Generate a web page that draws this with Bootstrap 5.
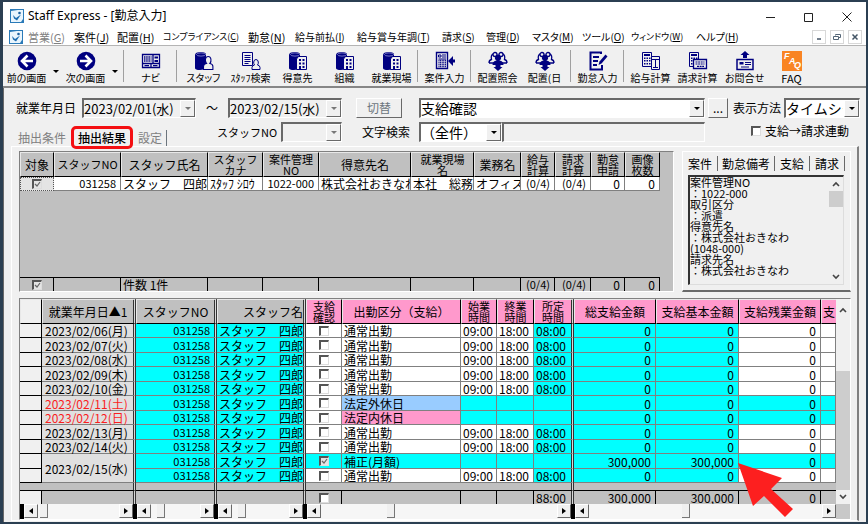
<!DOCTYPE html>
<html lang="ja">
<head>
<meta charset="utf-8">
<meta name="viewport" content="width=device-width, initial-scale=1">
<title>Staff Express - [勤怠入力]</title>
<link href="https://cdn.jsdelivr.net/npm/bootstrap@5.3.0/dist/css/bootstrap.min.css" rel="stylesheet">
<style>
body{font-family:"Noto Sans CJK JP",sans-serif;font-size:12px;line-height:14px;color:#000;background:#fff}
.win{min-height:calc(100vh - 1px);border:2px solid #2b3f52;border-left-width:3px;background:#f0f0f0}
button,select,input,textarea{font-family:inherit;color:inherit;border-radius:0}
.titlebar{height:27px;padding-left:7px;background:#fff}
.titlebar .caption{font-family:"Noto Sans","Noto Sans CJK JP",sans-serif;font-size:12px}
.wbtn{width:38px;height:27px;border:0;background:none;padding:0}
.menubar{height:16px;background:#fff;padding-left:6px;display:grid;grid-template-columns:19px 46px 43px 46px 85px 47px 62px 85px 44px 46px 50px 49px 65px 1fr auto}
.menubar .mi{border:0;background:none;padding:0;font-size:11px;line-height:14px;text-align:left;white-space:nowrap;font-feature-settings:"palt"}
.menubar .kana{font-size:10px}
.menubar .tiny{font-size:9px}
.menubar .off{color:#808080}
.mdi{width:14px;height:14px;border:1px solid #d8d8d8;background:#fff;padding:0;display:flex;align-items:center;justify-content:center}
.toolbar-x{height:43px;border-top:1px solid #b4b4b4;border-bottom:2px solid #868686}
.tb{width:47px;border:0;background:none;padding:5px 0 0;display:flex;flex-direction:column;align-items:center;font-size:10px;line-height:14px;white-space:nowrap;font-feature-settings:"palt"}
.tb svg{width:20px;height:20px;display:block}
.tb .big{font-size:11px}
.dd{width:12px;border:0;background:none;padding:10px 0 0;display:flex;align-items:center;justify-content:center}
.sep{width:6px;padding:4px 2px}
.sep::before{content:"";display:block;height:100%;border-left:1px solid #a0a0a0}
.tri{display:block;border:3px solid transparent;border-top-color:#000;border-bottom:0}
.client{border-left:1px solid #696969;padding-top:10px}
.line{height:20px;padding:0 6px 0 12px}
.combo,.sunken{height:20px;border:1px solid;border-color:#696969 #fff #fff #696969;border-width:2px 1px 1px 2px;position:relative}
.combo select{appearance:none;width:100%;height:17px;border:0;padding:0 16px 0 0;background:#fff;font-size:14px;line-height:17px;display:block}
.combo.dis select{background:#f0f0f0;font-size:13px}
.combo .ar{position:absolute;right:0;top:0;width:15px;height:17px;pointer-events:none;display:flex;align-items:center;justify-content:center}
.raised,.combo .ar{background:#f0f0f0;border:1px solid;border-color:#fff #696969 #696969 #fff}
.raised{padding:0;line-height:16px}
.dis .tri{border-top-color:#777}
.w114{width:114px}.w76{width:76px}.w61{width:61px}.w83{width:83px}
.ck{appearance:none;width:10px;height:10px;margin:0;border:1px solid;border-color:#555 #ddd #ddd #555;border-width:2px 1px 1px 2px;background:#fff;display:block}
.ck:checked{background:#e4e4e4 url("data:image/svg+xml,%3Csvg xmlns='http://www.w3.org/2000/svg' viewBox='0 0 7 7'%3E%3Cpath d='M1 3l2 2 3-4' fill='none' stroke='%23666' stroke-width='1.2'/%3E%3C/svg%3E") center/7px no-repeat}
.second{height:28px;padding:4px 6px 0 10px}
.second label{white-space:nowrap}
.ptab{border:0;background:none;padding:0;color:#808080;line-height:16px;position:relative;white-space:nowrap}
.ptab.on{color:#000;font-weight:500}
.ptab.on::after{content:"";position:absolute;left:-7px;right:-7px;top:-4px;height:23px;border:3px solid #f40f12;border-radius:5px}
.tabs-x{width:203px;height:24px;gap:12px;padding:0 0 0 4px}
.panel{border:1px solid;border-color:#fff #808080 #fff #fff;border-right-width:2px;margin:0 7px 0 7px;padding:4px 6px 0 7px}
.gridbox{background:#c0c0c0;border:1px solid #808080;border-color:#808080 #fff #fff #808080}
.g{table-layout:fixed;width:100%;border-collapse:separate;border-spacing:0;line-height:13px}
.g th,.g td{padding:0 4px 0 2px;white-space:nowrap;height:inherit}
.g .clip{overflow-x:clip;padding-right:0}
.g th{height:25px;background:#c0c0c0;font-weight:400;text-align:center;line-height:12px;padding:0;border:1px solid;border-color:#e8e8e8 #000 #000 #e8e8e8}
.g th.two{font-size:11px;line-height:11px}
.g tbody td{border-right:1px solid #808080;border-bottom:1px solid #808080;background:#fff}
.g .num{text-align:right}
.g .code{text-align:right;font-size:11px}
.g .ck{margin:0 auto}
.g .ctr{padding:0}
.top-g tbody tr{height:14px}
.top-g tbody td.sel{background:#e4e4e4;border:1px dotted #555;padding:0}
.top-g tr.fill,.top-g tr.fill td{height:86px;background:#c0c0c0;border:0}
.g tfoot td{height:14px;background:#c0c0c0;border-top:1px solid #000;border-right:1px solid #000}
.g .end,.g tbody .end,.g tfoot .end{background:#c0c0c0;border:0}
.side{width:169px;border:1px solid;border-color:#fff #fff #696969 #fff;border-bottom-width:2px}
.side .stab{border:0;border-right:1px solid #696969;background:none;padding:0 5px;line-height:15px;white-space:nowrap}
.memo{height:110px;margin:4px 6px 0 5px;border:1px solid;border-color:#333 #ddd #ddd #333;border-width:2px 1px 1px 2px}
.memo textarea{border:0;background:none;resize:none;overflow:hidden;padding:0;line-height:11px;font-size:11px;outline:0;display:block;min-width:0}
.vs{width:14px;flex:none;background:#f0f0f0}
.vs svg{width:8px;height:6px;display:block}
.low{margin-top:6px}
.low-g thead th.pk{background:#f9c}
.low-g tbody tr:nth-child(odd){height:14px}
.low-g tbody tr:nth-child(even){height:15px}
.low-g tbody td.w{background:#f0f0f0;border-color:#000}
.low-g tbody td.d{background:#e0e0e0;padding:0 0 0 3px}
.low-g td.nm{padding-right:0}
.low-g tbody td.c,.low-g tbody tr.hol td{background:#0ff}
.low-g tbody tr.hol td.w{background:#f0f0f0}
.low-g tbody tr.hol td.d{background:#e0e0e0;color:#fa1e1e}
.low-g tbody tr.hol td.p{background:#fff}
.low-g tbody tr.hol td.bl{background:#9cf}
.low-g tbody tr.hol td.rs{background:#f9c}
.low-g tbody tr.fix td{background:#0ff}
.low-g tbody tr.fix td.w{background:#f0f0f0}
.low-g tbody tr.fix td.d{background:#e0e0e0}
.low-g tr .e{border-right:3px double #333!important;background-clip:padding-box!important}
.low-g tfoot tr.gap td{height:7px;border-top:0;border-right:0}
.low-g .point{position:relative}
.point svg{position:absolute;left:100%;top:9px;width:56px;height:54px;z-index:3}
.low-g{background:#d8d8d8}
.hs{height:15px;background:#f6f6f6;border-left:4px solid #000}
.hs button{width:14px;height:14px;flex:none;padding:0;display:flex;align-items:center;justify-content:center}
.hs .trk{display:flex}
.hs .thumb{width:8px;height:14px;background:#f0f0f0;border-right:1px solid #777;border-bottom:1px solid #777}
.al{border:3px solid transparent;border-right:4px solid #000;border-left:0}
.arr{border:3px solid transparent;border-left:4px solid #000;border-right:0}
.p1{width:113px;flex:none}.p2{width:81px;flex:none}.p3{width:89px;flex:none}.p4{width:268px;flex:none}
</style>
<script src="https://cdn.jsdelivr.net/npm/bootstrap@5.3.0/dist/js/bootstrap.bundle.min.js"></script>
</head>
<body>
<svg class="d-none" aria-hidden="true">
<symbol id="app" viewBox="0 0 14 14"><rect width="14" height="14" fill="#2a7ab8"/><path d="M1 2l7-1 5 0v9l-2 3H1z" fill="#e9f5fd"/><circle cx="9.5" cy="4" r="1.3" fill="#1c5f9e"/><path d="M3 6l3 3 5-3.500-4 6-3-2z" fill="#1c6cb0"/></symbol>
<symbol id="cyl" viewBox="0 0 20 20"><path d="M1 4q0-3 6-3 5 0 5 2.500V17q-2 2-6 2-5 0-5-2z" fill="#000080"/><ellipse cx="7" cy="3.500" rx="4.500" ry="1.600" fill="#000080" stroke="#8f8fd0" stroke-width=".8"/></symbol>
<symbol id="man" viewBox="0 0 20 20"><path d="M9.500 18.500v-3q0-2.500 3-3-1.500-1.500-1-4.500.5-2.500 2.700-2.500t2.700 2.500q.5 3-1 4.500 3 .5 3 3v3z" fill="#f0f0f0" stroke="#000080" stroke-width="1.100"/></symbol>
<symbol id="bld" viewBox="0 0 20 20"><path d="M8.500 18.500V8l2-2.500h8v13z" fill="#f0f0f0" stroke="#000080"/><path d="M11 8h2v2h-2zM14.500 8h2v2h-2zM11 11.500h2v2h-2zM14.500 11.500h2v2h-2zM11 15h2v3h-2zM14.500 15h2v2h-2z" fill="#000080"/></symbol>
<symbol id="calc" viewBox="0 0 20 20"><path d="M1.500 1.500h9v14h-9z" fill="#f0f0f0" stroke="#000080"/><path d="M3 3h6v2H3zM3 6.500h1.500V8H3zM5.500 6.500H7V8H5.500zM8 6.500h1.500V8H8zM3 9h1.500v1.500H3zM5.500 9H7v1.500H5.500zM8 9h1.500v1.500H8zM3 12h1.500v1.500H3zM5.500 12H7v1.500H5.500zM8 12h1.500v1.500H8z" fill="#000080"/></symbol>
<symbol id="team" viewBox="0 0 20 20"><g fill="#f0f0f0" stroke="#000080" stroke-width="1.300"><path d="M1 12q0-3 2.500-3.500-1-5 2-5.500 3 .5 2 5.500M19 12q0-3-2.500-3.500 1-5-2-5.500-3 .5-2 5.500M1 12h18"/><circle cx="7" cy="3.500" r="2"/><circle cx="13" cy="3.500" r="2"/></g><path d="M10 3.500q3 .2 2.500 3.500 0 1.700-1 2.500 4 .5 4 4.500h-3v2h2L10 20l-4.500-4h2v-2h-3q0-4 4-4.500-1-.8-1-2.500Q7 3.700 10 3.500z" fill="#000080"/></symbol>
</svg>

<div class="win d-flex flex-column">
<header>
<div class="titlebar d-flex align-items-center">
<svg width="14" height="14"><use href="#app"/></svg>
<span class="caption ms-1 flex-grow-1">Staff Express - [勤怠入力]</span>
<button class="wbtn" aria-label="最小化"><svg width="10" height="10"><path d="M0 5.500h9" stroke="#222"/></svg></button>
<button class="wbtn" aria-label="最大化"><svg width="10" height="10"><path d="M.5 1.500h8v8h-8z" fill="none" stroke="#222"/></svg></button>
<button class="wbtn" aria-label="閉じる"><svg width="10" height="10"><path d="M.5 .5l9 9m0-9l-9 9" stroke="#222"/></svg></button>
</div>
<nav class="menubar align-items-center">
<svg width="14" height="14"><use href="#app"/></svg>
<button class="mi off">営業(<u>G</u>)</button><button class="mi">案件(<u>J</u>)</button><button class="mi">配置(<u>H</u>)</button><button class="mi tiny">コンプライアンス(<u>C</u>)</button><button class="mi">勤怠(<u>N</u>)</button><button class="mi kana">給与前払(<u>I</u>)</button><button class="mi kana">給与賞与年調(<u>T</u>)</button><button class="mi kana">請求(<u>S</u>)</button><button class="mi kana">管理(<u>D</u>)</button><button class="mi kana">マスタ(<u>M</u>)</button><button class="mi kana">ツール(<u>O</u>)</button><button class="mi tiny">ウィンドウ(<u>W</u>)</button><button class="mi kana">ヘルプ(<u>H</u>)</button>
<div class="d-flex gap-1 pe-1">
<button class="mdi" aria-label="子画面を最小化"><svg width="8" height="8"><path d="M2 6h4" stroke="#456" stroke-width="1.500"/></svg></button>
<button class="mdi" aria-label="子画面を元に戻す"><svg width="8" height="8"><path d="M2.500 2.500v-1h5v3h-2M.5 3.500h5v3h-5z" fill="none" stroke="#567"/></svg></button>
<button class="mdi" aria-label="子画面を閉じる"><svg width="8" height="8"><path d="M1.500 1.500l5 5m0-5l-5 5" stroke="#456" stroke-width="1.500"/></svg></button>
</div>
</nav>
<div class="toolbar-x d-flex">
<button class="tb"><svg viewBox="0 0 20 20"><circle cx="10" cy="10" r="9.300" fill="#000080"/><path d="M16 10H5.500M10.500 4.500L5 10l5.500 5.500" fill="none" stroke="#fff" stroke-width="2.600"/></svg>前の画面</button>
<button class="dd" aria-label="前の画面の一覧"><i class="tri"></i></button>
<button class="tb"><svg viewBox="0 0 20 20"><circle cx="10" cy="10" r="9.300" fill="#000080"/><path d="M4 10h10.500M9.500 4.500L15 10l-5.500 5.500" fill="none" stroke="#fff" stroke-width="2.600"/></svg>次の画面</button>
<button class="dd" aria-label="次の画面の一覧"><i class="tri"></i></button>
<span class="sep"></span>
<button class="tb"><svg viewBox="0 0 20 20"><path d="M1.500 3.500h17v13h-17zM1.500 12.500h17M10 12.500v4M12 3.500v9" fill="none" stroke="#000080" stroke-width="1.300"/><path d="M3 6h7.500M3 8h7.500M3 10h7.500" stroke="#000080" stroke-width="1.300" stroke-dasharray="1.500 .7"/><path d="M13.500 5.500h3.500v2h-3.500zM13.500 9h3.500v2h-3.500zM3.500 14h4.500v1.200H3.500zM12 14h4.500v1.200H12z" fill="#000080"/></svg>ナビ</button>
<span class="sep"></span>
<button class="tb"><svg><use href="#cyl"/><use href="#man"/></svg>スタッフ</button>
<button class="tb"><svg viewBox="0 0 20 20"><path d="M1.500 1.500h10v13h-10z" fill="#f0f0f0" stroke="#000080"/><path d="M3.500 4.500h6M3.500 6.500h6M3.500 8.500h6M3.500 10.500h6M3.500 12.500h4" stroke="#000080"/><path d="M11 18.500v-2q0-2 2.500-2.500-1-1-.8-3 .3-2.500 2.300-2.500t2.300 2.500q.2 2-.8 3 2.500.5 2.500 2.500v2z" fill="#f0f0f0" stroke="#000080"/></svg>ｽﾀｯﾌ検索</button>
<button class="tb"><svg><use href="#cyl"/><use href="#bld"/></svg>得意先</button>
<button class="tb"><svg><use href="#cyl"/><use href="#bld"/></svg>組織</button>
<button class="tb"><svg><use href="#cyl"/><use href="#bld"/></svg>就業現場</button>
<span class="sep"></span>
<button class="tb"><svg viewBox="0 0 20 20"><path d="M1.500 1.500h11v16h-11z" fill="none" stroke="#000080" stroke-width="1.400"/><path d="M3.500 4h2.500v2H3.500zM7 4h4M7 6h4M3.500 8h7.500" stroke="#000080" fill="none"/><path d="M3.500 9.500h7.500M3.500 11.500h7.500M3.500 13.500h7.500M3.500 15.500h7.500" stroke="#000080" stroke-width="1.500" stroke-dasharray="1 .6"/><path d="M13 10l5-5v3.500h2v3h-2V15z" fill="#000080"/></svg>案件入力</button>
<span class="sep"></span>
<button class="tb"><svg><use href="#team"/></svg>配置照会</button>
<button class="tb"><svg><use href="#team"/></svg>配置(日</button>
<span class="sep"></span>
<button class="tb"><svg viewBox="0 0 20 20"><path d="M13 3V1.500H2.500v17H14V14" fill="none" stroke="#000080" stroke-width="2"/><path d="M5 6h6M5 10h5M5 14h4" stroke="#000080" stroke-width="1.800"/><path d="M10.500 14l1-3.500 6-7 2 2-6 7z" fill="#000080"/></svg>勤怠入力</button>
<span class="sep"></span>
<button class="tb"><svg viewBox="0 0 20 20"><use href="#calc"/><path d="M10.500 5.500h8v13h-8zM10.500 8.500h8M14.500 8.500v8M12 16.500h5" fill="#f0f0f0" stroke="#000080"/></svg>給与計算</button>
<button class="tb"><svg viewBox="0 0 20 20"><use href="#calc"/><path d="M5.500 8.500h13v9h-13z" fill="#f0f0f0" stroke="#000080" stroke-width="1.300"/><path d="M7.500 11h9M7.500 13h9M9 15.300h7" stroke="#000080" stroke-width="1.200" stroke-dasharray="2 .6"/></svg>請求計算</button>
<button class="tb"><svg viewBox="0 0 20 20"><path d="M10 0l4.500 4H12v3H8V4H5.500z" fill="#000080"/><path d="M2 8.500h16v10H2z" fill="#f0f0f0" stroke="#000080" stroke-width="1.500"/><path d="M4.500 11h4v2.500h-4z" fill="#000080"/><path d="M10 11.500h6M10 13.500h6M6 16h8" stroke="#000080"/></svg>お問合せ</button>
<button class="tb"><svg viewBox="0 0 20 20"><rect width="20" height="20" fill="#f98423"/><g fill="#fff" font-family="Liberation Sans,sans-serif" font-weight="700" font-style="italic" font-size="9"><text x="2" y="8">F</text><text x="7" y="13">A</text><text x="12" y="17">Q</text></g></svg><span class="big">FAQ</span></button>
</div>
</header>

<main class="client flex-grow-1 d-flex flex-column">
<div class="line d-flex align-items-center">
<label for="from" style="width:66px">就業年月日</label>
<div class="combo dis w114"><select id="from"><option>2023/02/01(水)</option></select><span class="ar"><i class="tri"></i></span></div>
<span class="text-center" style="width:32px">～</span>
<div class="combo dis w114"><select aria-label="終了日"><option>2023/02/15(水)</option></select><span class="ar"><i class="tri"></i></span></div>
<button class="raised text-secondary h-100" style="width:46px;margin:0 17px 0 14px">切替</button>
<div class="combo flex-grow-1"><select aria-label="表示区分"><option>支給確認</option></select><span class="ar"><i class="tri"></i></span></div>
<button class="raised h-100" style="width:20px;margin:0 5px 0 3px">...</button>
<label for="view" style="width:51px">表示方法</label>
<div class="combo w76"><select id="view"><option>タイムシート</option></select><span class="ar"><i class="tri"></i></span></div>
</div>
<div class="second d-flex align-items-start">
<div class="tabs-x d-flex align-items-end flex-shrink-0" role="tablist">
<button class="ptab" role="tab">抽出条件</button><button class="ptab on" role="tab">抽出結果</button><button class="ptab pe-1 border-end border-secondary" role="tab">設定</button>
</div>
<label for="sno" class="flex-shrink-0" style="width:64px;font-size:11px;line-height:20px">スタッフNO</label>
<div class="combo dis w61"><select id="sno"><option></option></select><span class="ar"><i class="tri"></i></span></div>
<label for="find" class="flex-shrink-0" style="width:57px;margin-left:20px;line-height:20px">文字検索</label>
<div class="combo w83 flex-shrink-0"><select id="find"><option>（全件）</option></select><span class="ar"><i class="tri"></i></span></div>
<input class="sunken flex-grow-1" style="background:#f0f0f0;min-width:0" aria-label="検索文字">
<div class="d-flex align-items-center flex-shrink-0" style="width:155px;height:18px;padding-left:46px"><input type="checkbox" class="ck" id="link"><label for="link" class="ms-1">支給→請求連動</label></div>
</div>

<section class="panel">
<div class="d-flex">
<div class="gridbox flex-grow-1" style="min-width:0">
<table class="g top-g">
<colgroup><col style="width:34px"><col style="width:67px"><col style="width:87px"><col style="width:55px"><col style="width:56px"><col style="width:92px"><col style="width:63px"><col style="width:47px"><col style="width:34px"><col style="width:36px"><col style="width:34px"><col style="width:35px"><col></colgroup>
<thead><tr><th>対象</th><th class="two">スタッフNO</th><th>スタッフ氏名</th><th class="two">スタッフ<br>カナ</th><th class="two">案件管理<br>NO</th><th>得意先名</th><th class="two">就業現場<br>名</th><th>業務名</th><th class="two">給与<br>計算</th><th class="two">請求<br>計算</th><th class="two">勤怠<br>申請</th><th class="two">画像<br>枚数</th><td class="end"></td></tr></thead>
<tbody>
<tr><td class="sel"><input type="checkbox" class="ck" checked aria-label="対象"></td><td class="code">031258</td><td class="nm">スタッフ　四郎</td><td>ｽﾀｯﾌ ｼﾛｳ</td><td class="code">1022-000</td><td class="clip">株式会社おきなわ</td><td class="clip">本社　総務</td><td class="clip">オフィス</td><td class="code">(0/4)</td><td class="code">(0/4)</td><td class="num">0</td><td class="num">0</td><td class="end"></td></tr>
<tr class="fill"><td colspan="13"></td></tr>
</tbody>
<tfoot><tr><td class="ctr"><input type="checkbox" class="ck" checked aria-label="全対象"></td><td></td><td>件数 1件</td><td></td><td></td><td></td><td></td><td></td><td class="code">(0/4)</td><td class="code">(0/4)</td><td class="num">0</td><td class="num">0</td><td class="end"></td></tr></tfoot>
</table>
</div>
<aside class="side ms-2 flex-shrink-0">
<div class="d-flex pt-1" role="tablist"><button class="stab" role="tab">案件</button><button class="stab" role="tab" style="padding:0 4px">勤怠備考</button><button class="stab" role="tab">支給</button><button class="stab" role="tab">請求</button></div>
<div class="memo d-flex">
<textarea readonly class="flex-grow-1" aria-label="案件情報">案件管理NO
：1022-000
取引区分
：派遣
得意先名
：株式会社おきなわ
(1048-000)
請求先名
：株式会社おきなわ</textarea>
<div class="vs d-flex flex-column align-items-center py-1"><svg viewBox="0 0 8 6"><path d="M1 5l3-3 3 3" fill="none" stroke="#444" stroke-width="1.600"/></svg><span class="d-block w-100 mt-1 mb-auto" style="height:16px;background:#cdcdcd"></span><svg viewBox="0 0 8 6"><path d="M1 1l3 3 3-3" fill="none" stroke="#444" stroke-width="1.600"/></svg></div>
</div>
</aside>
</div>

<div class="gridbox low d-flex">
<div class="flex-grow-1" style="min-width:0">
<table class="g low-g">
<colgroup><col style="width:22px"><col style="width:94px"><col style="width:81px"><col style="width:89px"><col style="width:36px"><col style="width:119px"><col style="width:36px"><col style="width:37px"><col style="width:40px"><col style="width:82px"><col style="width:83px"><col style="width:82px"><col></colgroup>
<thead><tr><th style="background:#f0f0f0"></th><th class="e">就業年月日▲1</th><th class="e">スタッフNO</th><th class="e text-end">スタッフ名</th><th class="pk two">支給<br>確認</th><th class="pk">出勤区分（支給）</th><th class="pk two">始業<br>時間</th><th class="pk two">終業<br>時間</th><th class="pk e two">所定<br>時間</th><th class="pk">総支給金額</th><th class="pk">支給基本金額</th><th class="pk">支給残業金額</th><th class="pk border-end-0">支</th></tr></thead>
<tbody>
<tr><td class="w"></td><td class="d e">2023/02/06(月)</td><td class="c code e">031258</td><td class="c nm e">スタッフ　四郎</td><td class="p ctr"><input type="checkbox" class="ck" aria-label="支給確認"></td><td>通常出勤</td><td>09:00</td><td>18:00</td><td class="c e">08:00</td><td class="c num">0</td><td class="c num">0</td><td class="num">0</td><td></td></tr>
<tr><td class="w"></td><td class="d e">2023/02/07(火)</td><td class="c code e">031258</td><td class="c nm e">スタッフ　四郎</td><td class="p ctr"><input type="checkbox" class="ck" aria-label="支給確認"></td><td>通常出勤</td><td>09:00</td><td>18:00</td><td class="c e">08:00</td><td class="c num">0</td><td class="c num">0</td><td class="num">0</td><td></td></tr>
<tr><td class="w"></td><td class="d e">2023/02/08(水)</td><td class="c code e">031258</td><td class="c nm e">スタッフ　四郎</td><td class="p ctr"><input type="checkbox" class="ck" aria-label="支給確認"></td><td>通常出勤</td><td>09:00</td><td>18:00</td><td class="c e">08:00</td><td class="c num">0</td><td class="c num">0</td><td class="num">0</td><td></td></tr>
<tr><td class="w"></td><td class="d e">2023/02/09(木)</td><td class="c code e">031258</td><td class="c nm e">スタッフ　四郎</td><td class="p ctr"><input type="checkbox" class="ck" aria-label="支給確認"></td><td>通常出勤</td><td>09:00</td><td>18:00</td><td class="c e">08:00</td><td class="c num">0</td><td class="c num">0</td><td class="num">0</td><td></td></tr>
<tr><td class="w"></td><td class="d e">2023/02/10(金)</td><td class="c code e">031258</td><td class="c nm e">スタッフ　四郎</td><td class="p ctr"><input type="checkbox" class="ck" aria-label="支給確認"></td><td>通常出勤</td><td>09:00</td><td>18:00</td><td class="c e">08:00</td><td class="c num">0</td><td class="c num">0</td><td class="num">0</td><td></td></tr>
<tr class="hol"><td class="w"></td><td class="d e">2023/02/11(土)</td><td class="code e">031258</td><td class="nm e">スタッフ　四郎</td><td class="p ctr"><input type="checkbox" class="ck" aria-label="支給確認"></td><td class="bl">法定外休日</td><td></td><td></td><td class="e"></td><td class="num">0</td><td class="num">0</td><td class="num">0</td><td></td></tr>
<tr class="hol"><td class="w"></td><td class="d e">2023/02/12(日)</td><td class="code e">031258</td><td class="nm e">スタッフ　四郎</td><td class="p ctr"><input type="checkbox" class="ck" aria-label="支給確認"></td><td class="rs">法定内休日</td><td></td><td></td><td class="e"></td><td class="num">0</td><td class="num">0</td><td class="num">0</td><td></td></tr>
<tr><td class="w"></td><td class="d e">2023/02/13(月)</td><td class="c code e">031258</td><td class="c nm e">スタッフ　四郎</td><td class="p ctr"><input type="checkbox" class="ck" aria-label="支給確認"></td><td>通常出勤</td><td>09:00</td><td>18:00</td><td class="c e">08:00</td><td class="c num">0</td><td class="c num">0</td><td class="num">0</td><td></td></tr>
<tr><td class="w"></td><td class="d e">2023/02/14(火)</td><td class="c code e">031258</td><td class="c nm e">スタッフ　四郎</td><td class="p ctr"><input type="checkbox" class="ck" aria-label="支給確認"></td><td>通常出勤</td><td>09:00</td><td>18:00</td><td class="c e">08:00</td><td class="c num">0</td><td class="c num">0</td><td class="num">0</td><td></td></tr>
<tr class="fix"><td class="w"></td><td class="d e" rowspan="2">2023/02/15(水)</td><td class="code e">031258</td><td class="nm e">スタッフ　四郎</td><td class="p ctr"><input type="checkbox" class="ck" checked aria-label="支給確認"></td><td>補正(月額)</td><td></td><td></td><td class="e"></td><td class="num">300,000</td><td class="num point">300,000<svg viewBox="0 0 56 54" aria-hidden="true"><path d="M0 0l44 15-11 11 22 20-8 8-21-21-11 10z" fill="#fd1f1f"/></svg></td><td class="num">0</td><td></td></tr>
<tr><td class="w"></td><td class="c code e">031258</td><td class="c nm e">スタッフ　四郎</td><td class="p ctr"><input type="checkbox" class="ck" aria-label="支給確認"></td><td>通常出勤</td><td>09:00</td><td>18:00</td><td class="c e">08:00</td><td class="c num">0</td><td class="c num">0</td><td class="num">0</td><td></td></tr>
</tbody>
<tfoot>
<tr class="gap"><td></td><td class="e"></td><td class="e"></td><td class="e"></td><td></td><td></td><td></td><td></td><td class="e"></td><td></td><td></td><td></td><td></td></tr>
<tr><td style="background:#f0f0f0"></td><td class="e"></td><td class="e"></td><td class="e"></td><td class="ctr"><input type="checkbox" class="ck" aria-label="全確認"></td><td></td><td></td><td></td><td class="e">88:00</td><td class="num">300,000</td><td class="num">300,000</td><td class="num">0</td><td class="border-end-0"></td></tr>
</tfoot>
</table>
<div class="d-flex">
<div class="hs p1 d-flex"><button class="raised" aria-label="左へ"><i class="al"></i></button><div class="trk flex-grow-1"><span class="thumb" style="margin-left:2%"></span></div><button class="raised" aria-label="右へ"><i class="arr"></i></button></div>
<div class="hs p2 d-flex"><button class="raised" aria-label="左へ"><i class="al"></i></button><div class="trk flex-grow-1"><span class="thumb" style="margin-left:12%"></span></div><button class="raised" aria-label="右へ"><i class="arr"></i></button></div>
<div class="hs p3 d-flex"><button class="raised" aria-label="左へ"><i class="al"></i></button><div class="trk flex-grow-1"><span class="thumb" style="margin-left:11%"></span></div><button class="raised" aria-label="右へ"><i class="arr"></i></button></div>
<div class="hs p4 d-flex"><button class="raised" aria-label="左へ"><i class="al"></i></button><div class="trk flex-grow-1"><span class="thumb" style="margin-left:28%"></span></div><button class="raised" aria-label="右へ"><i class="arr"></i></button></div>
<div class="hs flex-grow-1 d-flex"><button class="raised" aria-label="左へ"><i class="al"></i></button><div class="trk flex-grow-1"><span class="thumb" style="margin-left:40%"></span></div><button class="raised" aria-label="右へ"><i class="arr"></i></button></div>
</div>
</div>
<div class="vs d-flex flex-column align-items-center pt-1"><svg class="mt-1" viewBox="0 0 8 6"><path d="M1 5l3-3 3 3" fill="none" stroke="#444" stroke-width="1.600"/></svg><span class="d-block w-100 mt-auto" style="height:55%;background:#cdcdcd"></span><svg class="my-1" viewBox="0 0 8 6"><path d="M1 1l3 3 3-3" fill="none" stroke="#444" stroke-width="1.600"/></svg><span class="d-block w-100" style="height:15px;background:#c8c8c8"></span></div>
</div>
</section>
</main>
</div>
</body>
</html>
